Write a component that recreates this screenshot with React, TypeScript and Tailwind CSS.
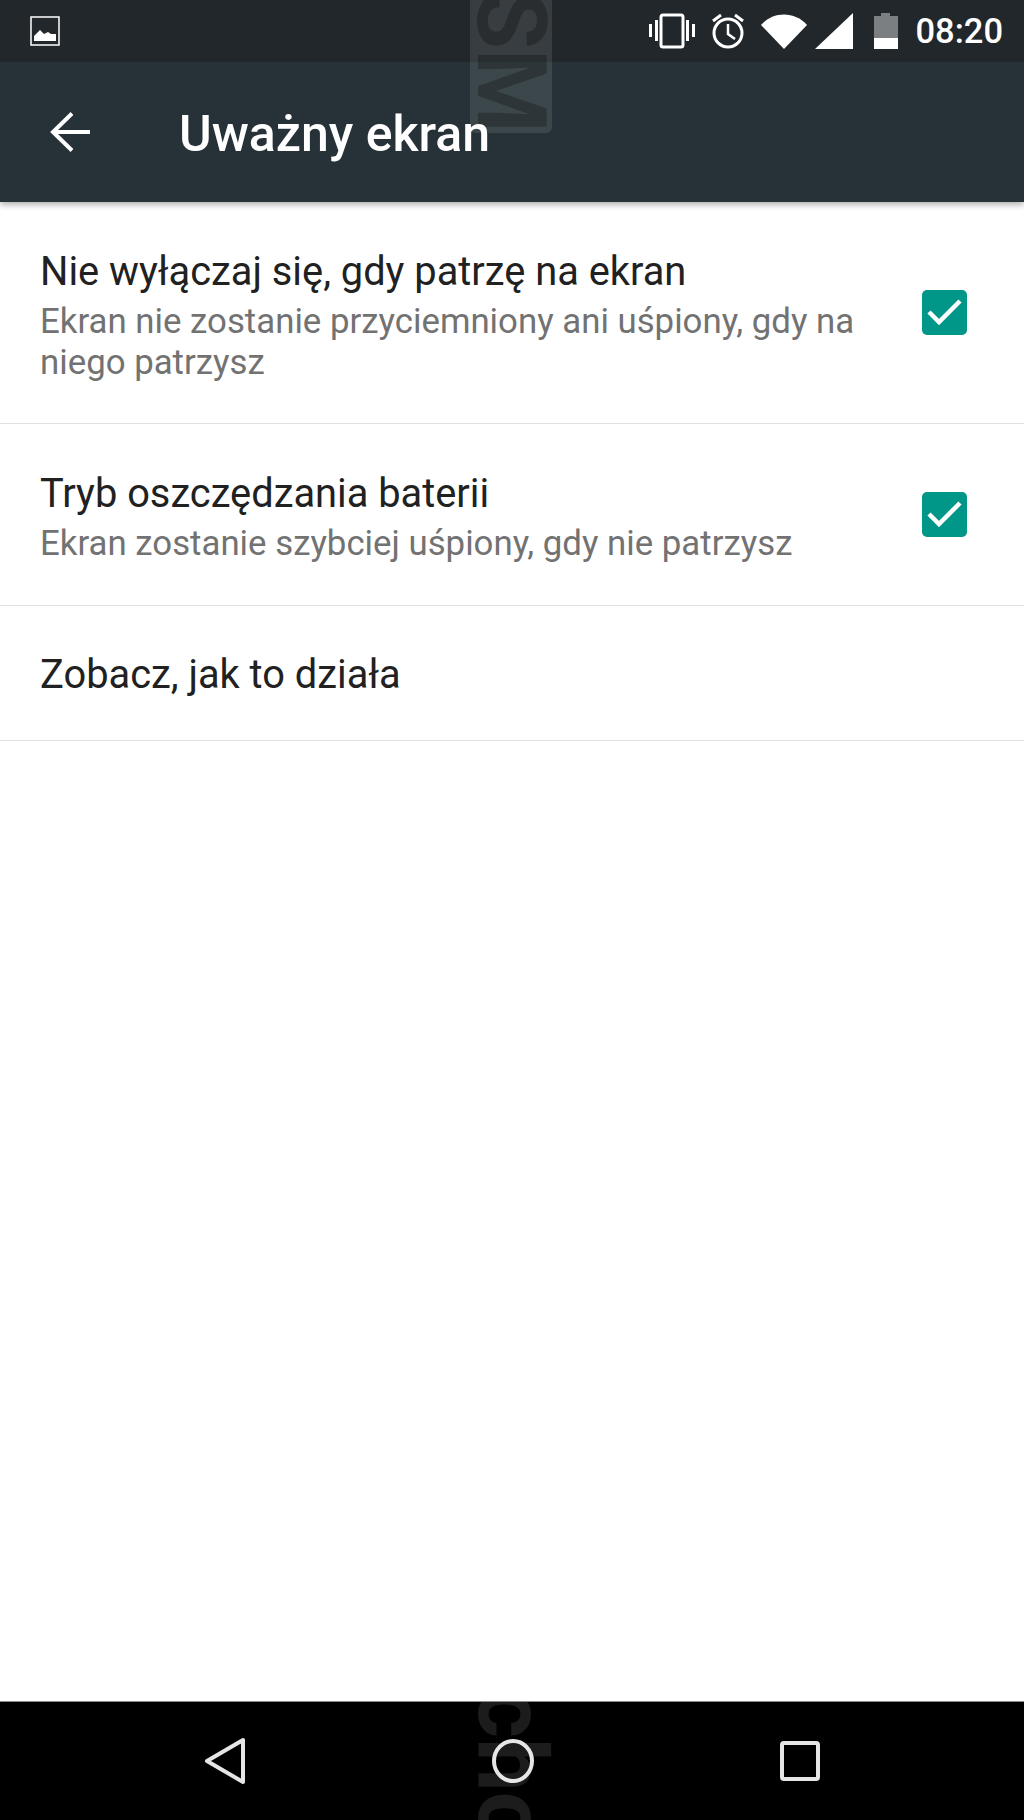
const roboto = "font-['Roboto',sans-serif]";

function StatusIcons() {
  return (
    <div className="relative z-10 flex items-center">
      <svg width="46" height="36" viewBox="0 0 46 36" fill="none">
        <rect x="12" y="2" width="22" height="32" rx="2" stroke="white" strokeWidth="3" />
        <rect x="0" y="11" width="3" height="13" fill="white" />
        <rect x="6" y="7" width="3" height="21" fill="white" />
        <rect x="37" y="7" width="3" height="21" fill="white" />
        <rect x="43" y="11" width="3" height="13" fill="white" />
      </svg>
      <svg width="36" height="36" viewBox="0 0 36 36" className="ml-[15px]" fill="none" stroke="white">
        <circle cx="18" cy="20" r="14" strokeWidth="3" />
        <path d="M18 11v10l7 5" strokeWidth="2.5" />
        <path d="M3 8l8-6M33 8l-8-6" strokeWidth="3" />
      </svg>
      <svg width="46" height="36" viewBox="0 0 46 36" className="ml-[15px]">
        <path d="M0 12C12 -2 34 -2 46 12L23 36Z" fill="white" />
      </svg>
      <svg width="38" height="36" viewBox="0 0 38 36" className="ml-[8px]">
        <path d="M38 0V36H0Z" fill="white" />
      </svg>
      <svg width="24" height="36" viewBox="0 0 24 36" className="ml-[21px]">
        <path d="M7 0h9v3h8v33H0V3h7Z" fill="#7b7f81" />
        <rect x="0" y="25" width="24" height="11" fill="white" />
      </svg>
      <span className="ml-[17px] text-[34.5px] leading-none font-medium text-white">08:20</span>
    </div>
  );
}

function Check() {
  return (
    <div className="flex h-[45px] w-[45px] shrink-0 items-center justify-center rounded-[5px] bg-[#009688]">
      <svg width="45" height="45" viewBox="0 0 45 45" fill="none">
        <path d="M7 22l10 10L38 11" stroke="white" strokeWidth="4.5" />
      </svg>
    </div>
  );
}

function Row({ title, sub, checked, h }: { title: string; sub?: string; checked?: boolean; h: string }) {
  return (
    <div className={`flex items-center justify-between border-b border-[#e0e0e0] pl-10 pr-[57px] ${h}`}>
      <div className="w-[830px] pt-[4px]">
        <p className="text-[39.8px] leading-[50px] text-[#212121]">{title}</p>
        {sub && <p className="mt-[4px] text-[34.8px] leading-[41px] text-[#727272]">{sub}</p>}
      </div>
      {checked && <Check />}
    </div>
  );
}

export default function App() {
  return (
    <div className={`${roboto} relative flex h-[1820px] w-[1024px] flex-col overflow-hidden bg-white`}>
      <div className="flex h-[62px] items-center justify-between bg-[#21272b] pl-[30px] pr-[21px]">
        <svg width="30" height="30" viewBox="0 0 30 30" fill="none">
          <rect x="1" y="1" width="28" height="28" stroke="white" strokeWidth="1.5" />
          <path d="M4 25v-5l6-6 4 4 4-2 3 2h5v7Z" fill="white" />
        </svg>
        <StatusIcons />
      </div>
      <div className="flex h-[140px] items-center bg-[#263238] pl-[50px] shadow-[0_3px_6px_rgba(0,0,0,0.3)]">
        <svg width="40" height="40" viewBox="0 0 40 40" fill="none" stroke="white" strokeWidth="4">
          <path d="M40 20H3M22 1.5L3 20l19 18.5" />
        </svg>
        <h1 className="relative z-10 mt-[5px] ml-[89px] text-[50px] font-medium text-white">Uważny ekran</h1>
      </div>
      {/* watermark over the bars */}
      <div className="absolute top-0 left-[470px] h-[133px] w-[82px] overflow-hidden rounded-b-[6px] bg-white/10">
        <span className="absolute top-[-10px] left-[-7px] text-[96px] leading-none font-bold text-black/25 [writing-mode:vertical-rl]">
          SM
        </span>
      </div>
      <Row
        h="h-[222px]"
        title="Nie wyłączaj się, gdy patrzę na ekran"
        sub="Ekran nie zostanie przyciemniony ani uśpiony, gdy na niego patrzysz"
        checked
      />
      <Row h="h-[182px]" title="Tryb oszczędzania baterii" sub="Ekran zostanie szybciej uśpiony, gdy nie patrzysz" checked />
      <Row h="h-[135px]" title="Zobacz, jak to działa" />
      <div className="flex-1" />
      <div className="relative flex h-[119px] items-center justify-between overflow-hidden border-t border-[#8a8a8a] bg-black px-[204px]">
        <span className="absolute top-[-14px] left-[464px] text-[96px] leading-none font-bold text-[#1c1c1c] [writing-mode:vertical-rl]">
          chc
        </span>
        <svg width="41" height="48" viewBox="0 0 41 48" fill="none">
          <path d="M39 3V45L3 24Z" stroke="#e6e6e6" strokeWidth="4" strokeLinejoin="round" />
        </svg>
        <svg width="42" height="44" viewBox="0 0 42 44" fill="none" className="relative z-10">
          <ellipse cx="21" cy="22" rx="19" ry="20" stroke="#e6e6e6" strokeWidth="4" />
        </svg>
        <svg width="40" height="40" viewBox="0 0 40 40" fill="none">
          <rect x="2" y="2" width="36" height="36" rx="2" stroke="#e6e6e6" strokeWidth="4" />
        </svg>
      </div>
    </div>
  );
}
